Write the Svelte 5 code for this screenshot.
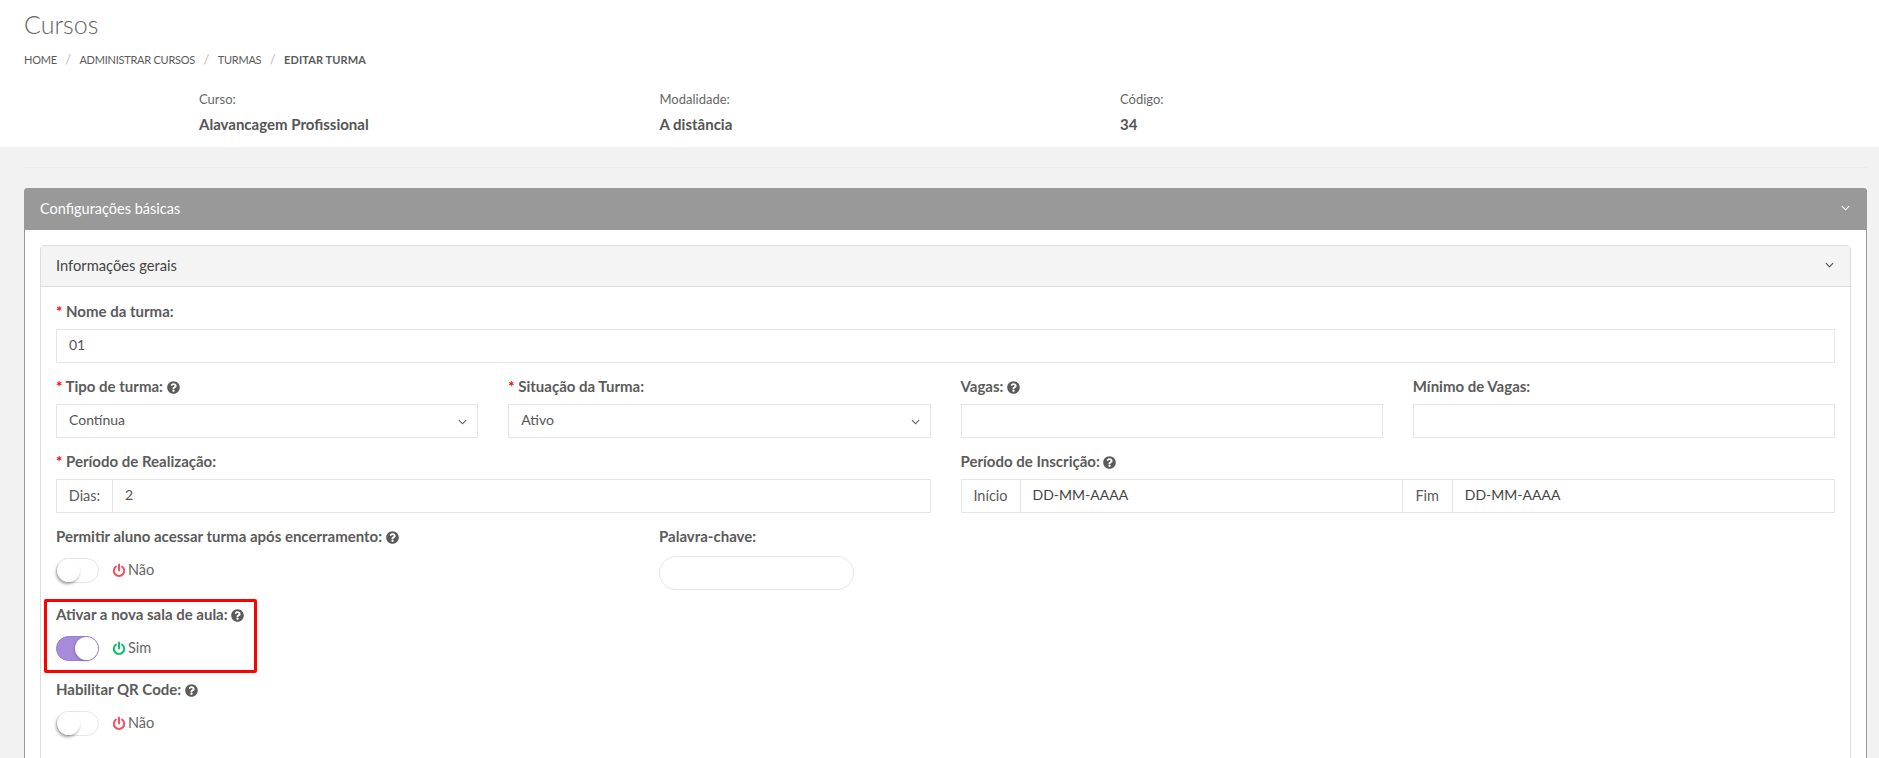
<script>
  const crumbs = ['Home', 'Administrar cursos', 'Turmas'];
  const summary = [
    { label: 'Curso:', value: 'Alavancagem Profissional' },
    { label: 'Modalidade:', value: 'A distância' },
    { label: 'Código:', value: '34' }
  ];
</script>

{#snippet help()}
  <svg class="help" viewBox="0 0 512 512" aria-hidden="true">
    <path d="M504 256c0 136.997-111.043 248-248 248S8 392.997 8 256C8 119.083 119.043 8 256 8s248 111.083 248 248zM262.655 90c-54.497 0-89.255 22.957-116.549 63.758-3.536 5.286-2.353 12.415 2.715 16.258l34.699 26.31c5.205 3.947 12.621 3.008 16.665-2.122 17.864-22.658 30.113-35.797 57.303-35.797 20.429 0 45.698 13.148 45.698 32.958 0 14.976-12.363 22.667-32.534 33.976C247.128 238.528 216 254.941 216 296v4c0 6.627 5.373 12 12 12h56c6.627 0 12-5.373 12-12v-1.333c0-28.462 83.186-29.647 83.186-106.667 0-58.002-60.165-102-116.531-102zM256 338c-25.365 0-46 20.635-46 46 0 25.364 20.635 46 46 46s46-20.636 46-46c0-25.365-20.635-46-46-46z" />
  </svg>
{/snippet}

{#snippet chevron(cls)}
  <svg class={cls} viewBox="0 0 10 6" aria-hidden="true">
    <path d="M1 1l4 4 4-4" fill="none" stroke="currentColor" stroke-width="1.2" />
  </svg>
{/snippet}

{#snippet toggle(on)}
  <div class="toggle-row">
    <span class="switch" class:on><span class="knob"></span></span>
    <svg class="power" class:on viewBox="0 0 14 14" aria-hidden="true">
      <path d="M7 1v6" fill="none" stroke="currentColor" stroke-width="2" stroke-linecap="round" />
      <path d="M3.9 3.1a5.2 5.2 0 1 0 6.2 0" fill="none" stroke="currentColor" stroke-width="2" stroke-linecap="round" />
    </svg>
    <span class="state">{on ? 'Sim' : 'Não'}</span>
  </div>
{/snippet}

<div class="page">
  <header class="top">
    <h1>Cursos</h1>
    <nav class="breadcrumb">
      {#each crumbs as crumb}
        <span>{crumb}</span><i>/</i>
      {/each}
      <b>Editar turma</b>
    </nav>
    <div class="summary">
      {#each summary as item}
        <div>
          <div class="summary-label">{item.label}</div>
          <div class="summary-value">{item.value}</div>
        </div>
      {/each}
    </div>
  </header>

  <main class="content">
    <hr />
    <section class="panel">
      <div class="panel-head">
        <span>Configurações básicas</span>
        {@render chevron('chev')}
      </div>
      <div class="panel-body">
        <section class="card">
          <div class="card-head">
            <span>Informações gerais</span>
            {@render chevron('chev')}
          </div>
          <div class="card-body">
            <div class="field">
              <label for="nome"><em>*</em> Nome da turma:</label>
              <input id="nome" value="01" />
            </div>

            <div class="grid">
              <div class="field">
                <label for="tipo"><em>*</em> Tipo de turma: {@render help()}</label>
                <div class="select">
                  <select id="tipo"><option>Contínua</option></select>
                  {@render chevron('chev')}
                </div>
              </div>
              <div class="field">
                <label for="situacao"><em>*</em> Situação da Turma:</label>
                <div class="select">
                  <select id="situacao"><option>Ativo</option></select>
                  {@render chevron('chev')}
                </div>
              </div>
              <div class="field">
                <label for="vagas">Vagas: {@render help()}</label>
                <input id="vagas" />
              </div>
              <div class="field">
                <label for="minimo">Mínimo de Vagas:</label>
                <input id="minimo" />
              </div>

              <div class="field span2">
                <label for="dias"><em>*</em> Período de Realização:</label>
                <div class="group">
                  <span class="addon dias">Dias:</span>
                  <input id="dias" value="2" />
                </div>
              </div>
              <div class="field span2">
                <label for="inicio">Período de Inscrição: {@render help()}</label>
                <div class="group">
                  <span class="addon inicio">Início</span>
                  <input id="inicio" class="date" value="DD-MM-AAAA" />
                  <span class="addon fim">Fim</span>
                  <input class="date" value="DD-MM-AAAA" />
                </div>
              </div>
            </div>

            <div class="row-split">
              <div class="field switch-field">
                <span class="label">Permitir aluno acessar turma após encerramento: {@render help()}</span>
                {@render toggle(false)}
              </div>
              <div class="field keyword">
                <label for="palavra">Palavra-chave:</label>
                <input id="palavra" class="pill" />
              </div>
            </div>

            <div class="highlight switch-field">
              <span class="label">Ativar a nova sala de aula: {@render help()}</span>
              {@render toggle(true)}
            </div>

            <div class="field switch-field qr">
              <span class="label">Habilitar QR Code: {@render help()}</span>
              {@render toggle(false)}
            </div>
          </div>
        </section>
      </div>
    </section>
  </main>
</div>

<style>
  :global(body) {
    margin: 0;
    background: #f2f2f2;
  }

  .page {
    height: 758px;
    overflow: hidden;
    font-family: Lato, 'Liberation Sans', sans-serif;
    font-size: 14px;
    color: #5b5b5b;
  }

  .top {
    height: 147px;
    box-sizing: border-box;
    background: #fff;
    padding: 9px 24px 0;
  }

  h1 {
    margin: 0;
    font-size: 25px;
    line-height: 30px;
    font-weight: 300;
    color: #666;
  }

  .breadcrumb {
    display: flex;
    align-items: center;
    margin-top: 12px;
    height: 16px;
    font-size: 11px;
    letter-spacing: -0.25px;
    text-transform: uppercase;
    color: #5b5b5b;
  }

  .breadcrumb i {
    margin: 0 8.5px;
    font-style: normal;
    font-size: 13px;
    color: #bbb;
  }

  .breadcrumb b {
    font-weight: 700;
    letter-spacing: 0.1px;
  }

  .summary {
    display: grid;
    grid-template-columns: repeat(3, 460.5px);
    margin: 24px 0 0 175px;
  }

  .summary-label {
    font-size: 13px;
    line-height: 16px;
    color: #666;
  }

  .summary-value {
    margin-top: 9px;
    font-size: 15px;
    line-height: 16px;
    font-weight: 700;
    color: #555;
  }

  .content {
    padding: 20px 12px 0 24px;
  }

  hr {
    margin: 0 0 20px;
    border: 0;
    border-top: 1px solid #ececec;
  }

  .panel {
    border: 1px solid #999;
    border-top: 0;
    border-radius: 4px 4px 0 0;
    background: #fff;
  }

  .panel-head {
    display: flex;
    align-items: center;
    justify-content: space-between;
    box-sizing: border-box;
    height: 42px;
    margin: 0 -1px;
    padding: 0 17px 2px 16px;
    border-radius: 4px 4px 0 0;
    background: #999;
    color: #fff;
    font-size: 14.5px;
  }

  .panel-body {
    padding: 15px 15px 0;
  }

  .card {
    border: 1px solid #ddd;
    border-radius: 4px 4px 0 0;
  }

  .card-head {
    display: flex;
    align-items: center;
    justify-content: space-between;
    box-sizing: content-box;
    height: 38px;
    padding: 0 16px 2px 15px;
    background: #f4f4f4;
    border-bottom: 1px solid #ddd;
    color: #444;
    font-size: 14.7px;
  }

  .chev {
    width: 9px;
    height: 6px;
    flex: none;
  }

  .card-body {
    padding: 15px 15px 60px;
  }

  .field label,
  .label {
    display: block;
    height: 20px;
    margin-bottom: 7px;
    line-height: 18px;
    font-size: 15px;
    font-weight: 700;
    color: #5b5b5b;
  }

  em {
    font-style: normal;
    color: #f00;
  }

  .help {
    width: 13px;
    height: 13px;
    vertical-align: -2px;
    fill: #5b5b5b;
  }

  input,
  select {
    display: block;
    box-sizing: border-box;
    width: 100%;
    height: 34px;
    padding: 0 12px 3px;
    border: 1px solid #e6e6e6;
    border-radius: 0;
    background: #fff;
    font: inherit;
    color: #555;
    outline: none;
    appearance: none;
  }

  .select {
    position: relative;
  }

  .select .chev {
    position: absolute;
    right: 11px;
    top: 15px;
  }

  .grid {
    display: grid;
    grid-template-columns: repeat(4, 1fr);
    column-gap: 30px;
    row-gap: 14px;
    margin-top: 14px;
  }

  .span2 {
    grid-column: span 2;
  }

  .group {
    display: flex;
    height: 34px;
  }

  .addon {
    flex: none;
    display: flex;
    align-items: center;
    justify-content: center;
    box-sizing: border-box;
    padding-bottom: 2px;
    border: 1px solid #e6e6e6;
    border-right: 0;
    font-size: 14.5px;
  }

  .dias {
    width: 56px;
  }

  .inicio {
    width: 59px;
  }

  .fim {
    width: 49px;
  }

  .group input {
    flex: 1;
    min-width: 0;
  }

  .date {
    color: #444;
  }

  .date + .addon {
    border-left: 0;
  }

  .row-split {
    display: grid;
    grid-template-columns: 603px 195px;
    margin-top: 14px;
  }

  .pill {
    border-radius: 17px;
  }

  .keyword label {
    margin-bottom: 9px;
  }

  .switch-field .label {
    margin-bottom: 11px;
  }

  .toggle-row {
    display: flex;
    align-items: center;
    height: 25px;
  }

  .switch {
    position: relative;
    box-sizing: border-box;
    width: 43px;
    height: 25px;
    border: 1px solid #e6e6e6;
    border-radius: 13px;
    background: #fff;
  }

  .switch.on {
    background: #a98bdb;
    border-color: #9a7bcf;
  }

  .knob {
    position: absolute;
    left: 0;
    top: 0;
    width: 23px;
    height: 23px;
    border-radius: 50%;
    background: #fff;
    box-shadow: -1px 2px 3px rgba(0, 0, 0, 0.35);
  }

  .switch.on .knob {
    left: 18px;
    box-shadow: -1px 1px 3px rgba(0, 0, 0, 0.2);
  }

  .power {
    width: 14px;
    height: 15px;
    margin: 0 2px 1px 13px;
    color: #f4515f;
  }

  .power.on {
    color: #0cc26a;
  }

  .state {
    padding-bottom: 3px;
    font-size: 14.5px;
    color: #666;
  }

  .highlight {
    box-sizing: border-box;
    width: 213px;
    height: 74px;
    margin: 9px 0 7px -12px;
    padding: 3px 9px 0;
    border: 3px solid #f00;
    border-radius: 2px;
  }
</style>
